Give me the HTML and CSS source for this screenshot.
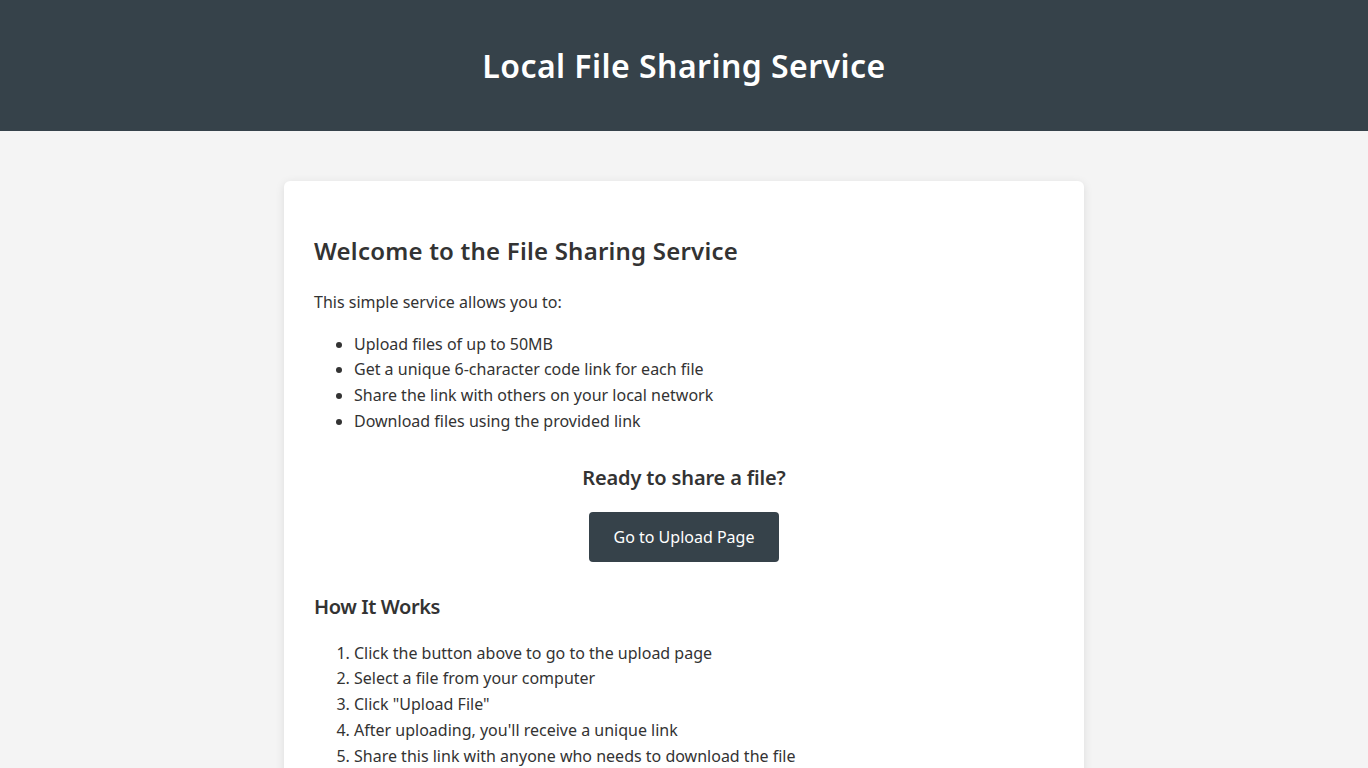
FILE: index.html
```html
<!DOCTYPE html>
<html lang="en">
<head>
<meta charset="utf-8">
<title>Local File Sharing Service</title>
<link rel="stylesheet" href="styles.css">
</head>
<body>
<header class="site-header">
  <h1 class="site-title">Local File Sharing Service</h1>
</header>
<main class="container">
  <section class="card">
    <h2 class="card-title">Welcome to the File Sharing Service</h2>
    <p class="intro">This simple service allows you to:</p>
    <ul class="feature-list">
      <li>Upload files of up to 50MB</li>
      <li>Get a unique 6-character code link for each file</li>
      <li>Share the link with others on your local network</li>
      <li>Download files using the provided link</li>
    </ul>
    <div class="cta">
      <h3 class="cta-title">Ready to share a file?</h3>
      <a class="btn" href="#">Go to Upload Page</a>
    </div>
    <h3 class="section-title">How It Works</h3>
    <ol class="steps">
      <li>Click the button above to go to the upload page</li>
      <li>Select a file from your computer</li>
      <li>Click "Upload File"</li>
      <li>After uploading, you'll receive a unique link</li>
      <li>Share this link with anyone who needs to download the file</li>
    </ol>
  </section>
</main>
</body>
</html>
```
FILE: styles.css
```css
* { box-sizing: border-box; }
html, body { margin: 0; padding: 0; }
body {
  background: #f4f4f4;
  color: #333;
  font-family: "Noto Sans", "Open Sans", sans-serif;
  font-size: 16px;
  line-height: 1.6;
}
.site-header {
  background: #36424a;
  color: #fff;
  height: 131px;
  display: flex;
  align-items: center;
  justify-content: center;
}
.site-title {
  margin: 0;
  font-size: 32px;
  line-height: 40px;
  font-weight: 600;
  letter-spacing: 0.45px;
}
.container {
  max-width: 800px;
  margin: 50px auto 40px;
}
.card {
  background: #fff;
  border-radius: 6px;
  box-shadow: 0 2px 10px rgba(0, 0, 0, 0.1);
  padding: 30px 30px 40px;
}
.card-title {
  margin: 25px 0 25px;
  font-size: 24px;
  line-height: 29px;
  font-weight: 600;
  letter-spacing: 0.22px;
}
.intro { margin: 0; line-height: 25.7px; }
.feature-list {
  margin: 16px 0 0;
  padding-left: 40px;
  line-height: 25.7px;
}
.cta {
  margin-top: 31px;
  text-align: center;
}
.cta-title {
  margin: 0 0 22px;
  font-size: 20px;
  line-height: 24px;
  font-weight: 600;
  letter-spacing: -0.15px;
}
.btn {
  display: inline-block;
  background: #36424a;
  color: #fff;
  text-decoration: none;
  padding: 12px 25px;
  line-height: 26px;
  border-radius: 4px;
}
.section-title {
  margin: 33px 0 22px;
  font-size: 20px;
  line-height: 24px;
  font-weight: 600;
  letter-spacing: -0.4px;
}
.steps {
  margin: 0;
  padding-left: 40px;
  line-height: 25.75px;
}
```
